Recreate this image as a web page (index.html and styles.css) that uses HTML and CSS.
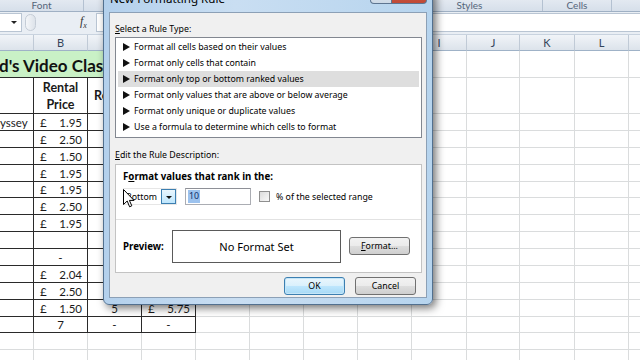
FILE: index.html
```html
<!DOCTYPE html>
<html>
	<head>
		<meta charset="UTF-8">
		<title>New Formatting Rule</title>
		<link rel="stylesheet" href="styles.css">
	</head>
	<body>
		<div class="excel">
			<div class="ribbon">
				<div class="grp grp-font">Font</div>
				<div class="grp grp-align"></div>
				<div class="grp grp-num"></div>
				<div class="grp grp-styles">Styles</div>
				<div class="grp grp-cells">Cells</div>
				<div class="grp grp-edit"></div>
			</div>
			<div class="fbar">
				<div class="namebox"><span class="nb-arrow"></span></div>
				<div class="grip"></div>
				<div class="fx">f<sub>x</sub></div>
				<div class="finput"></div>
			</div>
			<div class="sheet" id="sheet"></div>
		</div>

		<div class="dialog">
			<div class="caption">
				<div class="cap-title">New Formatting Rule</div>
				<div class="cap-btn cap-help">?</div>
				<div class="cap-btn cap-close">✕</div>
			</div>
			<div class="client">
				<div class="lbl"><u>S</u>elect a Rule Type:</div>
				<ul class="rules">
					<li>Format all cells based on their values</li>
					<li>Format only cells that contain</li>
					<li class="sel">Format only top or bottom ranked values</li>
					<li>Format only values that are above or below average</li>
					<li>Format only unique or duplicate values</li>
					<li>Use a formula to determine which cells to format</li>
				</ul>
				<div class="lbl lbl-edit"><u>E</u>dit the Rule Description:</div>
				<div class="desc">
					<div class="desc-top">
						<div class="desc-head">F<u>o</u>rmat values that rank in the:</div>
						<div class="ctrls">
							<div class="combo">
								<span class="combo-val">Bottom</span>
								<span class="combo-btn"><i></i></span>
							</div>
							<div class="tbox"><span class="tsel">10</span></div>
							<span class="chk"></span>
							<span class="chk-lbl">% of the selected range</span>
						</div>
					</div>
					<div class="desc-bot">
						<span class="prev-lbl">Preview:</span>
						<div class="prev-box">No Format Set</div>
						<div class="btn btn-fmt"><u>F</u>ormat...</div>
					</div>
				</div>
				<div class="actions">
					<div class="btn btn-ok">OK</div>
					<div class="btn">Cancel</div>
				</div>
			</div>
		</div>

		<svg class="cursor" width="12" height="19" viewBox="0 0 12 19">
			<path d="M0.5 0.5 V15.5 L4.2 12 L6.6 17.8 L8.8 16.8 L6.4 11.4 H11 Z" fill="#fff" stroke="#000" stroke-width="1" stroke-linejoin="round"/>
		</svg>

		<script type="text/javascript">
			//only the letters that show beside the dialog
			var heads=["","B","","","","","","","I","J","K","L",""];
			// table rows: A, B, C, D
			var rows=[
				["yssey","£1.95"],
				["","£2.50"],
				["","£1.50"],
				["","£1.95"],
				["","£1.95"],
				["","£2.50"],
				["","£1.95"],
				["",""],
				["","-"],
				["","£2.04"],
				["","£2.50"],
				["","£1.50","5","£5.75"],
				["","7","-","-"]
			];
			function cell(v,box){
				var cls="c"+(box?" bx":"");
				if(v.charAt(0)=="£"){
					return '<div class="'+cls+' money"><span>£</span><span>'+v.slice(1)+'</span></div>';
				}
				if(v=="-"||/^\d+$/.test(v)){
					cls+=" mid";
				}
				return '<div class="'+cls+'">'+v+'</div>';
			}
			var html="";
			for(var i=0;i<heads.length;i++){
				html+='<div class="c hd">'+heads[i]+'</div>';
			}
			//title row, merged over A:H
			html+='<div class="c bx title">d\'s Video Clas</div>';
			for(i=8;i<heads.length;i++){
				html+=cell("",false);
			}
			//column titles
			html+='<div class="c bx"></div><div class="c bx th">Rental<br>Price</div><div class="c bx th">Rentals</div><div class="c bx th"></div>';
			for(i=4;i<heads.length;i++){
				html+=cell("",false);
			}
			for(var r=0;r<rows.length+3;r++){
				var row=rows[r]||[];
				for(i=0;i<heads.length;i++){
					html+=cell(row[i]||"",r<rows.length&&i<4);
				}
			}
			document.getElementById("sheet").innerHTML=html;
		</script>
	</body>
</html>
```

FILE: styles.css
```css
body{
	margin: 0;
	width: 640px;
	height: 360px;
	overflow: hidden;
	position: relative;
	background: #fff;
	font-family: "Lato", "Noto Sans", sans-serif;
}
.excel{
	width: 640px;
	height: 360px;
	overflow: hidden;
}

/* ribbon group names */
.ribbon{
	display: flex;
	height: 11px;
	background: linear-gradient(#e3e9f1, #d6dfea);
	border-bottom: 1px solid #9fb0c4;
}
.grp{
	flex: none;
	box-sizing: border-box;
	border-right: 1px solid #b4c1d1;
	font-size: 10px;
	line-height: 10px;
	color: #55657a;
	text-align: center;
	overflow: hidden;
}
.grp-font{ width: 84px; }
.grp-align{ width: 166px; }
.grp-num{ width: 147px; }
.grp-styles{ width: 146px; }
.grp-cells{ width: 69px; }
.grp-edit{ width: 28px; border-right: 0; }

/* formula bar */
.fbar{
	display: flex;
	align-items: center;
	height: 23px;
	box-sizing: border-box;
	padding: 1px 0 2px;
	background: #e9eef4;
	border-bottom: 1px solid #c9d3df;
}
.namebox{
	position: relative;
	width: 22px;
	height: 19px;
	background: #fff;
	border: 1px solid #b9c5d3;
	border-left: 0;
	box-sizing: border-box;
}
.nb-arrow{
	position: absolute;
	right: 4px;
	top: 7px;
	border-left: 3px solid transparent;
	border-right: 3px solid transparent;
	border-top: 3px solid #222;
}
.grip{
	width: 9px;
	height: 15px;
	margin-left: 3px;
	border: 1px solid #c4ccd6;
	border-radius: 6px;
	background: linear-gradient(90deg, #f4f6f9, #dde3ea);
}
.fx{
	margin-left: 44px;
	width: 14px;
	font-family: "Liberation Serif", serif;
	font-style: italic;
	font-size: 12px;
	color: #333;
}
.fx sub{
	font-size: 8px;
}
.finput{
	flex: 1;
	height: 19px;
	margin-left: 2px;
	background: #fff;
	border: 1px solid #b9c5d3;
	border-right: 0;
	box-sizing: border-box;
}

/* sheet */
.sheet{
	display: grid;
	grid-template-columns: 34px 54px 54px 54px 54px 54px 54px 54px 55px 53px 55px 54px 60px;
	grid-template-rows: 16px 27px 36px 17px 17px 17px 17px 16px 17px 17px 17px 17px 17px 17px 17px 16px 17px 17px;
	grid-auto-rows: 17px;
}
.c{
	box-sizing: border-box;
	border-right: 1px solid #dadcdd;
	border-bottom: 1px solid #dadcdd;
	display: flex;
	align-items: center;
	overflow: hidden;
	white-space: nowrap;
	font-size: 11.5px;
	color: #1a1a1a;
}
.c.bx{
	border-color: #2a2a2a;
}
.hd{
	justify-content: center;
	background: linear-gradient(#f1f4f8, #dce3eb);
	border-right-color: #c0cad6;
	border-bottom-color: #9fb2c7;
	font-size: 11px;
	color: #34445a;
}
.title{
	grid-column: span 8;
	background: #c9f1c6;
	font-size: 17px;
	font-weight: bold;
	color: #111;
	padding-top: 3px;
	text-indent: -1px;
}
.th{
	justify-content: center;
	text-align: center;
	font-weight: bold;
	font-size: 12.5px;
	line-height: 17px;
	white-space: normal;
}
.money{
	justify-content: space-between;
	padding: 0 5px 0 6px;
}
.mid{
	justify-content: center;
}

/* dialog */
.dialog{
	position: absolute;
	left: 103px;
	top: -12px;
	width: 330px;
	height: 317px;
	box-sizing: border-box;
	display: flex;
	flex-direction: column;
	padding: 0 5px 6px;
	background: linear-gradient(90deg, #b3d0ec, #c9def2 40%, #b6d4ee);
	border: 1px solid #52708f;
	border-radius: 6px;
	box-shadow: 3px 3px 9px rgba(0, 0, 0, 0.55);
	font-family: "Noto Sans", "Open Sans", sans-serif;
	font-size: 8.8px;
	color: #000;
}
.caption{
	display: flex;
	height: 23px;
	flex: none;
}
.cap-title{
	flex: 1;
	padding-left: 1px;
	font-size: 11.6px;
	line-height: 19px;
}
.cap-btn{
	height: 16px;
	margin-top: -1px;
	box-sizing: border-box;
	border: 1px solid #5d7591;
	border-top: 0;
	text-align: center;
	font-size: 10px;
	line-height: 16px;
}
.cap-help{
	width: 22px;
	border-radius: 0 0 0 4px;
	background: linear-gradient(#e4ebf3, #cdd9e6);
	color: #334;
}
.cap-close{
	width: 35px;
	border-left: 0;
	border-radius: 0 0 4px 0;
	background: linear-gradient(#e8a495, #c5503c 60%, #c04a37);
	color: #fff;
}
.client{
	flex: 1;
	box-sizing: border-box;
	background: #f0f0f0;
	border: 1px solid #8ca0b6;
	padding: 10px 4px 0 5px;
}
.lbl{
	height: 13px;
	line-height: 13px;
	margin-bottom: 1px;
}
.lbl-edit{
	margin-top: 11px;
	margin-bottom: 2px;
}
.rules{
	list-style: none;
	margin: 0;
	padding: 1px 2px 0;
	height: 101px;
	box-sizing: border-box;
	background: #fff;
	border: 1px solid #828790;
}
.rules li{
	height: 16px;
	line-height: 16px;
	padding-left: 16px;
	position: relative;
}
.rules li::before{
	content: "";
	position: absolute;
	left: 5px;
	top: 4px;
	border-top: 4px solid transparent;
	border-bottom: 4px solid transparent;
	border-left: 7px solid #111;
}
.rules li.sel{
	background: #dedede;
}
.desc{
	height: 109px;
	box-sizing: border-box;
	background: #fff;
	border: 1px solid #c3c3c3;
}
.desc-top{
	height: 55px;
	box-sizing: border-box;
	padding: 6px 7px 0;
	border-bottom: 1px solid #e2e2e2;
}
.desc-head{
	font-weight: bold;
	font-size: 9.7px;
	line-height: 12px;
}
.ctrls{
	display: flex;
	align-items: center;
	height: 17px;
	margin-top: 5px;
}
.combo{
	display: flex;
	align-items: center;
	justify-content: space-between;
	width: 54px;
	height: 17px;
	box-sizing: border-box;
	border: 1px solid #e6e6e6;
	padding: 0 0 0 2px;
}
.combo-btn{
	position: relative;
	width: 15px;
	height: 15px;
	box-sizing: border-box;
	border: 1px solid #3c7fb1;
	background: linear-gradient(#eaf6fd, #bee6fd);
}
.combo-btn i{
	position: absolute;
	left: 4px;
	top: 6px;
	border-left: 3px solid transparent;
	border-right: 3px solid transparent;
	border-top: 3px solid #111;
}
.tbox{
	width: 66px;
	height: 17px;
	box-sizing: border-box;
	margin-left: 8px;
	border: 1px solid #abadb3;
	border-top-color: #8e9097;
	padding: 1px 0 0 2px;
}
.tsel{
	display: inline-block;
	background: #9cc2ee;
	color: #0e2f6a;
	line-height: 13px;
	padding: 0 1px;
}
.chk{
	width: 11px;
	height: 11px;
	box-sizing: border-box;
	margin-left: 8px;
	border: 1px solid #8f8f8f;
	background: linear-gradient(135deg, #dcdcdc, #f8f8f8);
}
.chk-lbl{
	margin-left: 6px;
}
.desc-bot{
	display: flex;
	align-items: center;
	height: 52px;
	padding-left: 7px;
}
.prev-lbl{
	width: 49px;
	font-weight: bold;
	font-size: 9.7px;
}
.prev-box{
	width: 169px;
	height: 33px;
	box-sizing: border-box;
	border: 1px solid #5a5a5a;
	display: flex;
	align-items: center;
	justify-content: center;
	font-size: 11px;
}
.btn{
	width: 61px;
	height: 18px;
	box-sizing: border-box;
	border: 1px solid #707070;
	border-radius: 3px;
	background: linear-gradient(#f2f2f2, #ebebeb 50%, #dddddd 51%, #cfcfcf);
	display: flex;
	align-items: center;
	justify-content: center;
}
.btn-fmt{
	margin-left: 8px;
}
.actions{
	display: flex;
	justify-content: flex-end;
	gap: 10px;
	margin-top: 4px;
	padding-right: 6px;
}
.btn-ok{
	border-color: #3c7fb1;
	background: linear-gradient(#eaf6fd, #d9f0fc 50%, #bee6fd 51%, #a7d9f5);
	box-shadow: inset 0 0 0 1px #c5e6f8;
}

.cursor{
	position: absolute;
	left: 123px;
	top: 189px;
}
```
